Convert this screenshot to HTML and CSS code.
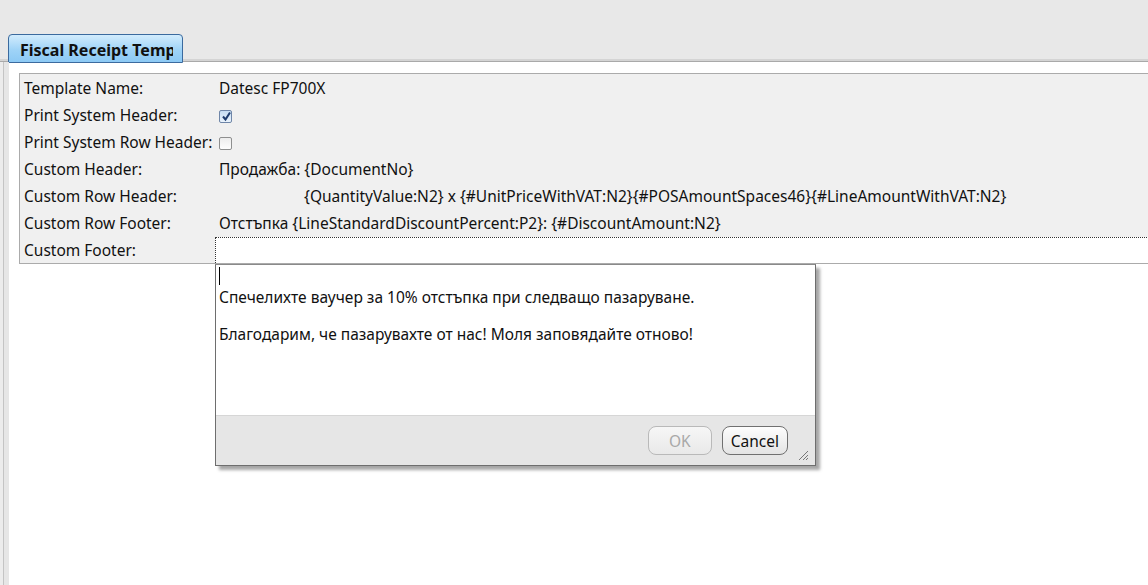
FILE: index.html
```html
<!DOCTYPE html>
<html lang="bg">
<head>
  <meta charset="UTF-8" />
  <title>Fiscal Receipt Template</title>
  <link rel="stylesheet" href="styles.css">
</head>
<body>
  <div class="tabbar">
    <div class="tab"><span>Fiscal Receipt Template</span></div>
  </div>

  <div class="main">
    <div class="strip"></div>
    <div class="content">
      <div class="panel">
        <div class="row">
          <div class="label">Template Name:</div>
          <div class="value">Datesc FP700X</div>
        </div>
        <div class="row">
          <div class="label">Print System Header:</div>
          <div class="value">
            <span class="check checked">
              <svg width="11" height="11" viewBox="0 0 11 11"><path d="M2 5.5 L4.5 8.5 L9 1.5" fill="none" stroke="#1e3c6e" stroke-width="2"/></svg>
            </span>
          </div>
        </div>
        <div class="row">
          <div class="label">Print System Row Header:</div>
          <div class="value"><span class="check"></span></div>
        </div>
        <div class="row">
          <div class="label">Custom Header:</div>
          <div class="value">Продажба: {DocumentNo}</div>
        </div>
        <div class="row">
          <div class="label">Custom Row Header:</div>
          <div class="value indent">{QuantityValue:N2} x {#UnitPriceWithVAT:N2}{#POSAmountSpaces46}{#LineAmountWithVAT:N2}</div>
        </div>
        <div class="row">
          <div class="label">Custom Row Footer:</div>
          <div class="value">Отстъпка {LineStandardDiscountPercent:P2}: {#DiscountAmount:N2}</div>
        </div>
        <div class="row">
          <div class="label">Custom Footer:</div>
          <div class="value field"></div>
        </div>
      </div>

      <div class="popup">
        <div class="editor">
          <div class="caret-line"><span class="caret"></span></div>
          <p>Спечелихте ваучер за 10% отстъпка при следващо пазаруване.</p>
          <p>Благодарим, че пазарувахте от нас! Моля заповядайте отново!</p>
        </div>
        <div class="popup-footer">
          <button class="btn" disabled>OK</button>
          <button class="btn">Cancel</button>
          <svg class="grip" width="12" height="12" viewBox="0 0 12 12">
            <path d="M11 2 L2 11 M11 6 L6 11 M11 9 L9 11" stroke="#777" stroke-width="1"/>
          </svg>
        </div>
      </div>
    </div>
  </div>
</body>
</html>
```

FILE: styles.css
```css
* { box-sizing: border-box; }

body {
  margin: 0;
  background: #fff;
  color: #111;
  font-family: "Noto Sans", "DejaVu Sans", sans-serif;
  font-size: 15.5px;
  overflow: hidden;
  height: 585px;
}

.tabbar {
  height: 62px;
  background: #e8e8e8;
  padding: 34px 0 0 8px;
  border-bottom: 1px solid #a9a9a9;
  box-shadow: inset 0 -2px 0 #d4d4d4;
}

.tab {
  width: 175px;
  height: 29px;
  padding: 4px 0 0 11px;
  border: 1px solid #3b6a9e;
  border-radius: 4px 4px 0 0;
  background: linear-gradient(#d2ecfd, #9fd3f7 55%, #8cc9f4);
  font-weight: bold;
  font-size: 16px;
  color: #101010;
}

.tab span {
  display: block;
  width: 153px;
  white-space: nowrap;
  overflow: hidden;
}

.main {
  display: flex;
  height: 523px;
}

.strip {
  width: 9px;
  background: #e6e6e6;
  border-left: 3px solid #ececec;
  box-shadow: inset 1px 0 0 #c4c4c4;
}

.content {
  flex: 1;
  position: relative;
  padding: 11px 0 0 10px;
  overflow: hidden;
}

.panel {
  margin-right: -4px;
  background: #f0f0f0;
  border: 1px solid #ababab;
}

.row {
  display: flex;
  height: 27px;
  align-items: center;
  padding-top: 1px;
}

.label {
  width: 195px;
  padding-left: 4px;
  white-space: nowrap;
}

.value {
  flex: 1;
  padding-left: 4px;
  white-space: nowrap;
}

.value.indent { padding-left: 89px; }

.value.field {
  align-self: stretch;
  background: #fff;
  border: 1px dotted #333;
  border-right: none;
  border-bottom: none;
}

.check {
  display: inline-block;
  width: 13px;
  height: 13px;
  vertical-align: middle;
  border: 1px solid #8e8f8f;
  border-radius: 2px;
  background: linear-gradient(#ededed, #fdfdfd);
}

.check.checked {
  background: linear-gradient(#c5dcf3, #eaf3fc);
  border-color: #6f86a8;
}

.check svg { display: block; margin: 0 0 0 1px; }

.popup {
  position: absolute;
  left: 206px;
  top: 202px;
  width: 601px;
  height: 202px;
  border: 1px solid #6e6e6e;
  border-top-color: #8a8a8a;
  background: #fff;
  box-shadow: 4px 4px 3px rgba(0, 0, 0, 0.35);
  display: flex;
  flex-direction: column;
}

.editor {
  flex: 1;
  padding: 2px 0 0 3px;
}

.caret-line { height: 20px; }

.caret {
  display: block;
  width: 1px;
  height: 18px;
  background: #000;
}

.editor p {
  margin: 0 0 17px;
  line-height: 20px;
}

.popup-footer {
  height: 50px;
  background: #e6e6e6;
  border-top: 1px solid #d6d6d6;
  display: flex;
  justify-content: flex-end;
  gap: 10px;
  padding: 10px 27px 0 0;
  position: relative;
}

.btn {
  height: 29px;
  padding: 0 8px;
  min-width: 64px;
  font-family: inherit;
  font-size: 15.5px;
  color: #111;
  border: 1px solid #707070;
  border-radius: 8px;
  background: linear-gradient(#fdfdfd, #e4e4e4);
}

.btn:disabled {
  color: #a8a8a8;
  border-color: #b9b9b9;
  background: linear-gradient(#f6f6f6, #e9e9e9);
}

.grip {
  position: absolute;
  right: 6px;
  bottom: 4px;
}
```
